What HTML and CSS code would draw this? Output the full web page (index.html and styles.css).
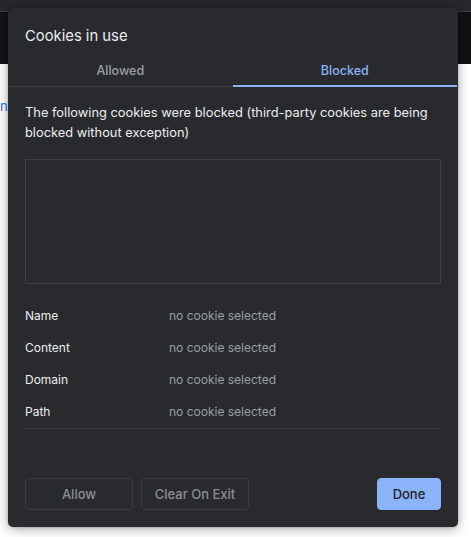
FILE: index.html
```html
<!DOCTYPE html>
<html>
<head>
<meta charset="utf-8">
<title>Cookies in use</title>
<link rel="stylesheet" href="styles.css">
</head>
<body>
<div class="page">
  <div class="toolbar"></div>
  <div class="strip"></div>
  <div class="content">
    <span class="link">n</span>
  </div>
</div>

<div class="dialog">
  <div class="title">Cookies in use</div>
  <div class="tabs">
    <div class="tab">Allowed</div>
    <div class="tab active">Blocked</div>
  </div>
  <div class="body">
    <p class="desc">The following cookies were blocked (third-party cookies are being blocked without exception)</p>
    <div class="tree"></div>
    <div class="details">
      <div class="row"><span class="label">Name</span><span class="value">no cookie selected</span></div>
      <div class="row"><span class="label">Content</span><span class="value">no cookie selected</span></div>
      <div class="row"><span class="label">Domain</span><span class="value">no cookie selected</span></div>
      <div class="row"><span class="label">Path</span><span class="value">no cookie selected</span></div>
    </div>
  </div>
  <div class="buttons">
    <button class="btn">Allow</button>
    <button class="btn">Clear On Exit</button>
    <span class="spacer"></span>
    <button class="btn primary">Done</button>
  </div>
</div>
</body>
</html>
```
FILE: styles.css
```css
html, body {
  margin: 0;
  padding: 0;
}
body {
  width: 471px;
  height: 537px;
  overflow: hidden;
  position: relative;
  font-family: Inter, "Liberation Sans", Arial, sans-serif;
  background: #ffffff;
}
.page {
  display: flex;
  flex-direction: column;
  height: 537px;
}
.toolbar {
  height: 11px;
  background: #27282b;
  border-bottom: 1px solid #3e3f42;
}
.strip {
  height: 52px;
  background: #111214;
}
.content {
  flex: 1;
  background: #ffffff;
  position: relative;
}
.link {
  position: absolute;
  left: 0;
  top: 32px;
  font-size: 13px;
  color: #1a73e8;
  line-height: 20px;
}
.dialog {
  position: absolute;
  left: 8px;
  top: 8px;
  width: 450px;
  height: 519px;
  background: #292a2d;
  border-radius: 5px;
  box-shadow: 0 2px 12px rgba(0, 0, 0, 0.35), 0 0 3px rgba(0, 0, 0, 0.2);
  display: flex;
  flex-direction: column;
  box-sizing: border-box;
  padding-bottom: 17px;
  color: #e8eaed;
}
.title {
  padding: 18px 17px 0;
  font-size: 14.8px;
  line-height: 20px;
  font-weight: 400;
  color: #eceef1;
}
.tabs {
  display: flex;
  border-bottom: 1px solid #3c3d41;
}
.tab {
  flex: 1;
  text-align: center;
  padding: 15px 0 4px;
  font-size: 12.5px;
  font-weight: 500;
  line-height: 20px;
  color: #9aa0a6;
  border-bottom: 2px solid transparent;
  margin-bottom: -1px;
}
.tab.active {
  color: #8ab4f8;
  border-bottom-color: #8ab4f8;
  margin-right: 1px;
}
.body {
  padding: 0 17px;
}
.desc {
  margin: 16px 0 0;
  font-size: 12.85px;
  line-height: 20px;
  color: #eceef1;
}
.tree {
  margin-top: 16px;
  height: 123px;
  border: 1px solid #3f4044;
}
.details {
  margin-top: 15px;
  padding-bottom: 1px;
  border-bottom: 1px solid #3c3d41;
}
.row {
  display: flex;
  height: 32px;
  align-items: center;
  font-size: 12px;
}
.label {
  width: 144px;
  color: #eceef1;
}
.value {
  color: #9aa0a6;
}
.buttons {
  margin-top: auto;
  padding: 0 17px;
  display: flex;
  gap: 8px;
}
.spacer {
  flex: 1;
}
.btn {
  font-family: inherit;
  height: 32px;
  width: 108px;
  background: transparent;
  border: 1px solid #3a3b3f;
  border-radius: 4px;
  color: #8b8e93;
  font-size: 13px;
  font-weight: 500;
  padding: 0;
}
.btn.primary {
  width: 64px;
  background: #8ab4f8;
  border-color: #8ab4f8;
  color: #202124;
}
```
